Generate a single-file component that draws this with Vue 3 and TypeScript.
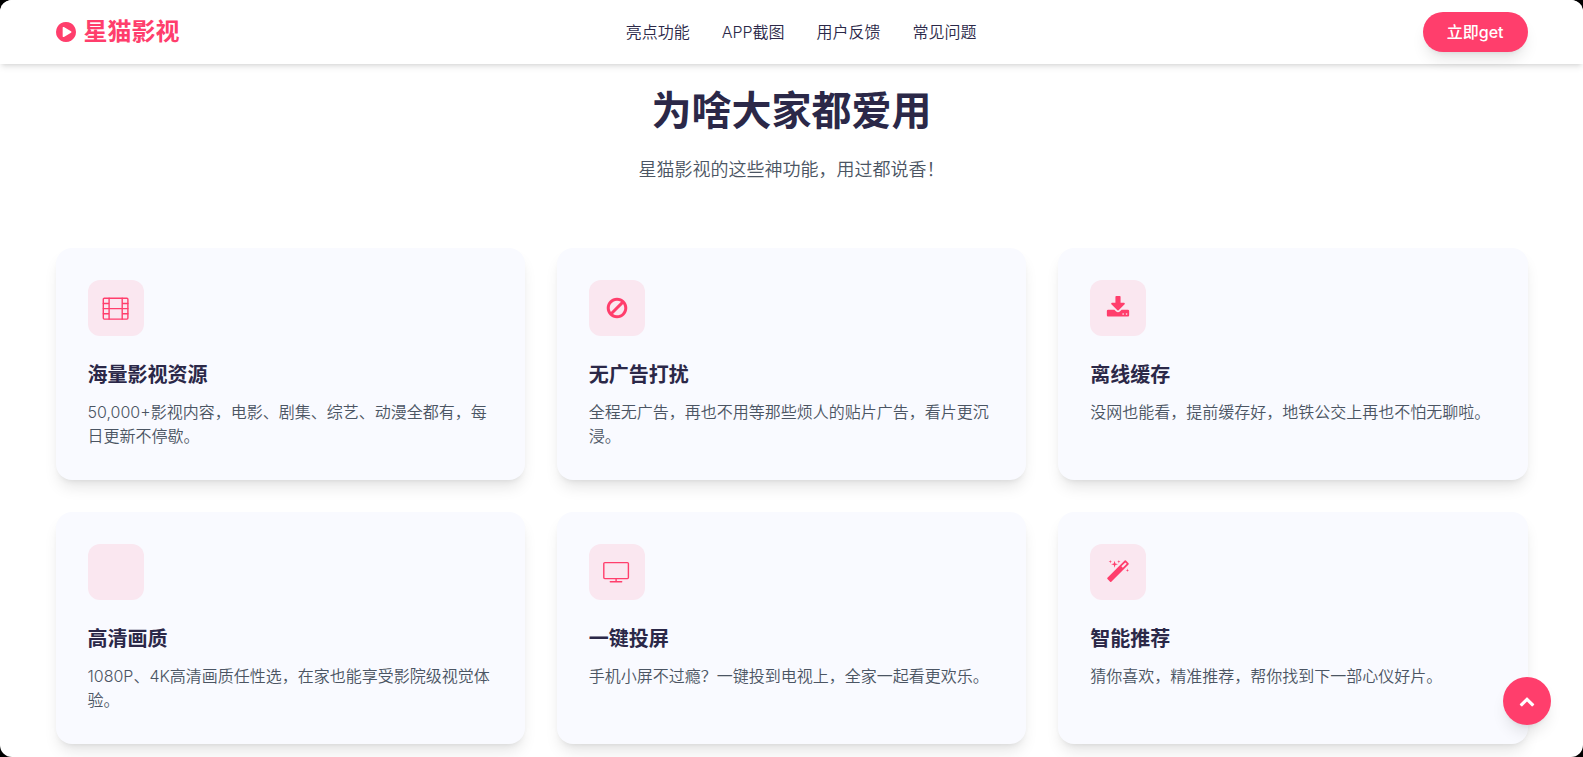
<script setup lang="ts">
interface NavItem {
  label: string
  href: string
}

interface Feature {
  title: string
  text: string
  icon: 'film' | 'ban' | 'download' | 'none' | 'screen' | 'magic'
}

const navItems: NavItem[] = [
  { label: '亮点功能', href: '#features' },
  { label: 'APP截图', href: '#screenshots' },
  { label: '用户反馈', href: '#feedback' },
  { label: '常见问题', href: '#faq' },
]

const features: Feature[] = [
  { title: '海量影视资源', text: '50,000+影视内容，电影、剧集、综艺、动漫全都有，每日更新不停歇。', icon: 'film' },
  { title: '无广告打扰', text: '全程无广告，再也不用等那些烦人的贴片广告，看片更沉浸。', icon: 'ban' },
  { title: '离线缓存', text: '没网也能看，提前缓存好，地铁公交上再也不怕无聊啦。', icon: 'download' },
  { title: '高清画质', text: '1080P、4K高清画质任性选，在家也能享受影院级视觉体验。', icon: 'none' },
  { title: '一键投屏', text: '手机小屏不过瘾？一键投到电视上，全家一起看更欢乐。', icon: 'screen' },
  { title: '智能推荐', text: '猜你喜欢，精准推荐，帮你找到下一部心仪好片。', icon: 'magic' },
]

const scrollToTop = (): void => {
  window.scrollTo({ top: 0, behavior: 'smooth' })
}
</script>

<template>
  <div class="page">
    <header class="header">
      <div class="container bar">
        <a class="logo" href="#">
          <svg class="logo-icon" viewBox="128 0 1536 1792" aria-hidden="true">
            <path d="M896 128q209 0 385.5 103t279.5 279.5 103 385.5-103 385.5-279.5 279.5-385.5 103-385.5-103-279.5-279.5-103-385.5 103-385.5 279.5-279.5 385.5-103zm384 823q32-18 32-55t-32-55l-544-320q-31-19-64-1-32 19-32 56v640q0 37 32 56 16 8 32 8 17 0 32-9z" />
          </svg>
          <span>星猫影视</span>
        </a>
        <nav class="nav">
          <a v-for="item in navItems" :key="item.href" :href="item.href">{{ item.label }}</a>
        </nav>
        <a class="cta" href="#download">立即get</a>
      </div>
    </header>

    <main id="features" class="container features">
      <h2>为啥大家都爱用</h2>
      <p class="lead">星猫影视的这些神功能，用过都说香！</p>
      <div class="grid">
        <article v-for="feature in features" :key="feature.title" class="card">
          <div class="badge">
            <svg v-if="feature.icon === 'film'" class="icon wide" viewBox="0 0 28 28" aria-hidden="true">
              <g class="line">
                <rect x="1.3" y="4.3" width="24.6" height="20.8" rx="1" />
                <path d="M7.1 4.3v20.8M20.2 4.3v20.8M7.1 14.6h13.1M1.3 9.5h5.8M1.3 14.6h5.8M1.3 19.8h5.8M20.2 9.5h5.7M20.2 14.6h5.7M20.2 19.8h5.7" />
              </g>
            </svg>
            <svg v-else-if="feature.icon === 'ban'" class="icon" viewBox="0 0 1792 1792" aria-hidden="true">
              <path d="M1440 893q0-161-87-295l-754 753q137 89 297 89 111 0 211.5-43.5t173.5-116.5 116-174.5 43-212.5zm-999 299l755-754q-135-91-300-91-148 0-273 73t-198 199-73 274q0 162 89 299zm1223-299q0 157-61 300t-163.5 246-245 164-298.5 61-298.5-61-245-164-163.5-246-61-300 61-299.5 163.5-245.5 245-164 298.5-61 298.5 61 245 164 163.5 245.5 61 299.5z" />
            </svg>
            <svg v-else-if="feature.icon === 'download'" class="icon" viewBox="0 0 1792 1792" aria-hidden="true">
              <path d="M1344 1344q0-26-19-45t-45-19-45 19-19 45 19 45 45 19 45-19 19-45zm256 0q0-26-19-45t-45-19-45 19-19 45 19 45 45 19 45-19 19-45zm128-224v320q0 40-28 68t-68 28h-1472q-40 0-68-28t-28-68v-320q0-40 28-68t68-28h465l135 136q58 56 136 56t136-56l136-136h464q40 0 68 28t28 68zm-325-569q17 41-14 70l-448 448q-18 19-45 19t-45-19l-448-448q-31-29-14-70 17-39 59-39h256v-448q0-26 19-45t45-19h256q26 0 45 19t19 45v448h256q42 0 59 39z" />
            </svg>
            <svg v-else-if="feature.icon === 'screen'" class="icon wide" viewBox="0 0 28 28" aria-hidden="true">
              <g class="line">
                <rect x="0.8" y="4.6" width="24.6" height="16" rx="1" />
                <path d="M13.1 20.6v3M7.3 23.8h11.4" />
              </g>
            </svg>
            <svg v-else-if="feature.icon === 'magic'" class="icon" viewBox="0 0 1792 1792" aria-hidden="true">
              <path d="M1254 581l293-293-107-107-293 293zm447-293q0 27-18 45l-1286 1286q-18 18-45 18t-45-18l-198-198q-18-18-18-45t18-45l1286-1286q18-18 45-18t45 18l198 198q18 18 18 45zm-1351-190l98 30-98 30-30 98-30-98-98-30 98-30 30-98zm350 162l196 60-196 60-60 196-60-196-196-60 196-60 60-196zm930 478l98 30-98 30-30 98-30-98-98-30 98-30 30-98zm-640-640l98 30-98 30-30 98-30-98-98-30 98-30 30-98z" />
            </svg>
          </div>
          <h3>{{ feature.title }}</h3>
          <p>{{ feature.text }}</p>
        </article>
      </div>
    </main>

    <button class="to-top" type="button" aria-label="返回顶部" @click="scrollToTop">
      <svg viewBox="0 0 1792 1792" aria-hidden="true">
        <path d="M1683 1331l-166 165q-19 19-45 19t-45-19l-531-531-531 531q-19 19-45 19t-45-19l-166-165q-19-19-19-45.5t19-45.5l742-741q19-19 45-19t45 19l742 741q19 19 19 45.5t-19 45.5z" />
      </svg>
    </button>
  </div>
</template>

<style>
body {
  margin: 0;
  background: #000;
}
</style>

<style scoped>
.page {
  min-height: 100vh;
  box-sizing: border-box;
  border-radius: 12px;
  background: #fff;
  color: #2b2848;
  font-family: Inter, "Noto Sans CJK SC", sans-serif;
  font-size: 16px;
  font-weight: 350;
  line-height: 24px;
}

.container {
  box-sizing: border-box;
  width: 100%;
  max-width: 1536px;
  margin: 0 auto;
  padding: 0 32px;
}

.header {
  position: sticky;
  top: 0;
  z-index: 10;
  border-radius: 12px 12px 0 0;
  background: #fff;
  box-shadow: 0 4px 6px -1px rgba(0, 0, 0, 0.1), 0 2px 4px -2px rgba(0, 0, 0, 0.1);
}

.bar {
  display: flex;
  align-items: center;
  justify-content: space-between;
  min-height: 64px;
}

a {
  color: inherit;
  text-decoration: none;
}

.logo {
  display: flex;
  align-items: center;
  gap: 8px;
  color: #ff3e6c;
  font-size: 24px;
  font-weight: 700;
  line-height: 32px;
}

.logo-icon {
  width: 20px;
  height: 24px;
  fill: currentColor;
}

.nav {
  display: flex;
  gap: 32px;
}

.cta {
  padding: 8px 24px;
  border-radius: 20px;
  background: #ff3e6c;
  color: #fff;
  font-weight: 500;
  box-shadow: 0 10px 15px -3px rgba(0, 0, 0, 0.1), 0 4px 6px -4px rgba(0, 0, 0, 0.1);
}

.features {
  padding-top: 16px;
}

h2 {
  margin: 0 0 14px;
  font-size: 40px;
  font-weight: 700;
  line-height: 62px;
  text-align: center;
}

.lead {
  margin: 0 0 64px;
  color: #4b5563;
  font-size: 18px;
  line-height: 28px;
  text-align: center;
}

.grid {
  display: grid;
  grid-template-columns: repeat(3, 1fr);
  gap: 32px;
}

.card {
  padding: 32px;
  border-radius: 16px;
  background: #f9faff;
  box-shadow: 0 10px 15px -3px rgba(0, 0, 0, 0.1), 0 4px 6px -4px rgba(0, 0, 0, 0.1);
}

.badge {
  display: flex;
  align-items: center;
  justify-content: center;
  width: 56px;
  height: 56px;
  margin-bottom: 24px;
  border-radius: 12px;
  background: #fae7f0;
  color: #ff3e6c;
}

.icon {
  width: 24px;
  height: 24px;
  fill: currentColor;
}

.wide {
  width: 28px;
  height: 28px;
}

.line {
  fill: none;
  stroke: currentColor;
  stroke-width: 1.4;
  stroke-linecap: round;
}

h3 {
  margin: 0 0 10px;
  font-size: 20px;
  font-weight: 700;
  line-height: 30px;
}

.card p {
  margin: 0;
  color: #4b5563;
}

.to-top {
  position: fixed;
  right: 32px;
  bottom: 32px;
  z-index: 20;
  display: flex;
  align-items: center;
  justify-content: center;
  width: 48px;
  height: 48px;
  padding: 0;
  border: 0;
  border-radius: 50%;
  background: #ff3e6c;
  color: #fff;
  cursor: pointer;
  box-shadow: 0 10px 15px -3px rgba(0, 0, 0, 0.1), 0 4px 6px -4px rgba(0, 0, 0, 0.1);
}

.to-top svg {
  width: 16px;
  height: 16px;
  fill: currentColor;
}

@media (max-width: 1023px) {
  .grid {
    grid-template-columns: repeat(2, 1fr);
  }
}

@media (max-width: 767px) {
  .nav {
    display: none;
  }

  .grid {
    grid-template-columns: 1fr;
  }
}
</style>
